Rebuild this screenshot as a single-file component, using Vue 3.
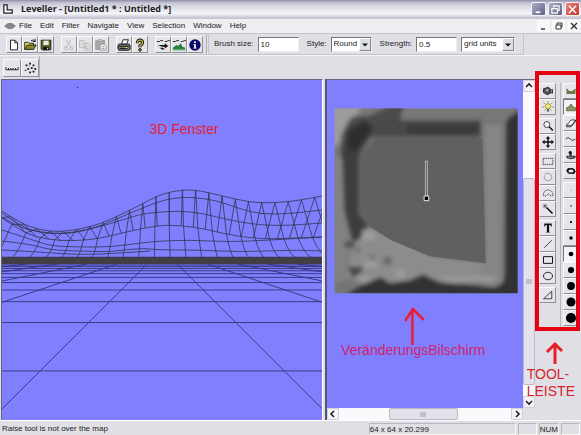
<script setup>
import { ref } from 'vue'

const menus = ['File', 'Edit', 'Filter', 'Navigate', 'View', 'Selection', 'Window', 'Help']
const brush = ref('10')
const strength = ref('0.5')
const style = ref('Round')
const unit = ref('grid units')

const G = '#b4b4b4'
const K = '#111'
const fileTools = [
  [
    { n: 'New', s: `<path d="M4 2.500h5l3 3v8h-8z" fill="#fff" stroke="${K}"/><path d="M9 2.500v3h3" fill="none" stroke="${K}"/>` },
    { n: 'Open', s: `<path d="M2 13V5h4l1 1h5v3" fill="#e6e65a" stroke="${K}"/><path d="M2 13l3-5h10l-3 5z" fill="#8c8c1c" stroke="${K}"/><path d="M9 3q3-2 5 1m0-3v3h-3" fill="none" stroke="${K}"/>` },
    { n: 'Save', s: `<path d="M2.500 2.500h11v11h-10l-1-1z" fill="#5d6a20" stroke="${K}"/><path d="M5 3h6v5H5z" fill="#e8e8e0"/><path d="M5 10h6v4H5z" fill="${K}"/><path d="M9 11h1v2H9z" fill="#fff"/>` }
  ],
  [
    { n: 'Cut', s: `<path d="M5 2l5 8M10 2l-5 8" stroke="${G}" fill="none"/><circle cx="4.500" cy="12" r="1.800" fill="none" stroke="${G}"/><circle cx="10.500" cy="12" r="1.800" fill="none" stroke="${G}"/>` },
    { n: 'Copy', s: `<path d="M2 3h5l2 2v6H2zM7 6h5l2 2v6H7z" fill="#e8e8ea" stroke="${G}"/><path d="M4 6h2M4 8h2M9 10h3M9 12h3" stroke="${G}"/>` },
    { n: 'Paste', s: `<path d="M2 3h10v10H2z" fill="#a8a8a8" stroke="#999"/><path d="M5 2h4v2H5z" fill="#ddd" stroke="#999"/><path d="M7 7h5l2 2v5H7z" fill="#eee" stroke="#999"/><path d="M9 10h3M9 12h3" stroke="#999"/>` }
  ],
  [
    { n: 'Print', s: `<path d="M5 7l2-5h6l-2 5z" fill="#fff" stroke="${K}"/><path d="M2 7h12l1 2v4l-2 1H2l-1-2V9z" fill="#777" stroke="${K}"/><path d="M2 9.500h12M3 12h9" stroke="${K}"/><path d="M9 11h3" stroke="#dd3"/>` },
    { n: 'Help', s: `<path d="M5 6q0-3.500 3-3.500t3 3q0 1.500-3 3.500v1.500" fill="none" stroke="${K}" stroke-width="3.600"/><path d="M5 6q0-3.500 3-3.500t3 3q0 1.500-3 3.500v1.500" fill="none" stroke="#b9b93a" stroke-width="1.500"/><circle cx="8" cy="13.500" r="1.500" fill="#88881c" stroke="${K}"/>` }
  ],
  [
    { n: 'Import', s: `<path d="M1 4h3l1-1h3M10 4h2l2-1h2" stroke="${K}" fill="none"/><path d="M2 8h8V6l4 3-4 3v-2H7z" fill="${K}"/><path d="M4 11h4l2 2H7z" fill="${K}"/>` },
    { n: 'Render', s: `<path d="M1 4h3l1-1h3M10 4h2l2-1h2" stroke="${K}" fill="none"/><path d="M1 14v-3l4-3 2 1 3-3 2 4 3 1v3z" fill="#27803b"/><path d="M1 13h14" stroke="#75b77c"/>` },
    { n: 'Info', s: `<circle cx="8" cy="8" r="6.500" fill="#080866"/><path d="M6 7h3v4h1v1H6v-1h1V8H6z" fill="#fff"/><circle cx="8" cy="4.800" r="1.200" fill="#fff"/>` }
  ]
]
const viewTools = [
  { n: 'Ruler', s: `<path d="M1 7v3h14V7M4 8v2M6.500 8v2M9 8v2M12 8v2" fill="none" stroke="${K}"/>` },
  { n: 'Points', s: `<path d="M3 4h2v2H3zM7 2h2v2H7zM11 4h2v2h-2zM5 8h2v2H5zM9 7h2v2H9zM13 8h2v2h-2zM2 10h2v1H2zM7 12h2v2H7zM11 11h2v2h-2zM7 5h1v1H7z" fill="${K}"/>` }
]
const drawTools = [
  [
    { n: 'Camera', s: `<path d="M2 5l6-2 3 2v6l-4 2-5-3z" fill="#555" stroke="${K}"/><circle cx="7" cy="7" r="1.500" fill="#ccc"/><path d="M11 7l3-1v5l-3-1z" fill="#999" stroke="${K}"/>` },
    { n: 'Light', s: `<circle cx="8" cy="7" r="3.500" fill="#f5ef72" stroke="#7c7a22"/><path d="M8 0v2M2 2l2 2M14 2l-2 2M0 8h3M13 8h3M3 13l2-2M13 13l-2-2" stroke="#8a861f"/><path d="M6.500 11h3v3h-3z" fill="#555"/>` }
  ],
  [
    { n: 'Zoom', s: `<circle cx="6.500" cy="6" r="4" fill="#f5f5f7" stroke="${K}"/><path d="M9.500 9l5 5" stroke="${K}" stroke-width="2.200"/>` },
    { n: 'Pan', s: `<path d="M8 0l3 3.500H9V7h3.500V5L16 8l-3.500 3V9H9v3.500h2L8 16l-3-3.500h2V9H3.500v2L0 8l3.500-3v2H7V3.500H5z" fill="${K}"/>` }
  ],
  [
    { n: 'Select rectangle', s: `<path d="M1.500 4.500h13v8h-13z" fill="none" stroke="${K}" stroke-dasharray="2 1"/>` },
    { n: 'Select ellipse', s: `<circle cx="8" cy="8" r="5" fill="none" stroke="#555" stroke-dasharray="2 1"/>` },
    { n: 'Lasso', s: `<path d="M2 11q0-7 6-7t7 7l-3 1-3-3-4 3z" fill="none" stroke="${K}" stroke-dasharray="2 1"/>` },
    { n: 'Wand', s: `<path d="M6 6l8 8" stroke="${K}" stroke-width="2.200"/><path d="M4 1v6M1 4h6M2 2l4 4M6 2L2 6" stroke="#555"/>` }
  ],
  [
    { n: 'Text', s: `<path d="M3 2h10v4h-1l-1-2H9.500v9l1.500 1H5l1.500-1V4H5L4 6H3z" fill="${K}"/>` },
    { n: 'Line', s: `<path d="M3 13L13 3" stroke="${K}"/>` },
    { n: 'Rectangle', s: `<path d="M2 3.500h12v9H2z" fill="none" stroke="${K}" stroke-width="1.300"/>` },
    { n: 'Ellipse', s: `<ellipse cx="8" cy="8" rx="6" ry="5" fill="none" stroke="${K}" stroke-width="1.200"/>` }
  ],
  [{ n: 'Slope', s: `<path d="M2 13L13 3v10z" fill="none" stroke="${K}"/>` }]
]
const shapeTools = [
  { n: 'Dig', s: `<path d="M2 5l4 4h4l4-4v7H2z" fill="#6b7c45"/><path d="M2 5l4 4h4l4-4" fill="none" stroke="#333"/>` },
  { n: 'Raise', on: true, s: `<path d="M2 13V9l3-1 3-4 3 4 3 1v4z" fill="#8c9663" stroke="#555b33"/>` },
  { n: 'Erase', s: `<path d="M2 11l6-7h6l-5 7z" fill="#fff" stroke="${K}"/><path d="M2 11v2h6l6-7V4" fill="none" stroke="${K}"/>` },
  { n: 'Smooth', s: `<path d="M1 8q3-4 6 0t7 0" fill="none" stroke="${K}"/>` },
  { n: 'Stamp', s: `<circle cx="7" cy="5" r="2.200" fill="${K}"/><path d="M6 6h3v3h5v3q-6 3-12 0V9h4z" fill="#333"/><path d="M4 11h7" stroke="#ccc"/>` },
  { n: 'Twist', s: `<ellipse cx="8" cy="8" rx="4.500" ry="3" fill="none" stroke="${K}" stroke-width="2"/><path d="M2 8l3-4M14 8l-3 4" stroke="${K}" stroke-width="1.500"/>` }
]
const brushes = [0.5, 1, 1.5, 2.3, 3.1, 4.1, 5.2, 6, 6.7]

// Ground grid, in perspective towards a vanishing point
const vx = 162
const vy = 249
const rows = Array.from({ length: 22 }, (_, n) => vy + 1 / (0.0082 + 0.0054 * n))
const rays = []
for (let k = 1; k <= 19; k += 2) {
  rays.push(`M${vx - 15 * k} ${vy + 15}L${vx - 320} ${vy + 320 / k}`)
  rays.push(`M${vx + 15 * k} ${vy + 15}L${vx + 320} ${vy + 320 / k}`)
}

// Hill contours, from the ridge down to the ground
const contours = [
  [[2, 211], [20, 223], [40, 230], [60, 232], [80, 229], [100, 224], [120, 215], [140, 205], [157, 196], [170, 192], [182, 190], [195, 190], [210, 193], [230, 198], [250, 202], [265, 203], [285, 202], [300, 200], [322, 196]],
  [[2, 213], [20, 226], [40, 233], [60, 234], [80, 232], [100, 226], [130, 213], [160, 201], [175, 198], [190, 197], [215, 200], [240, 209], [260, 214], [285, 214], [322, 210]],
  [[2, 217], [20, 228], [40, 232], [62, 234], [85, 230], [110, 224], [140, 214], [160, 212], [180, 211], [200, 213], [225, 219], [250, 224], [280, 226], [322, 223]],
  [[2, 218], [20, 230], [35, 237], [60, 241], [90, 240], [110, 236], [130, 231], [150, 227], [165, 225], [185, 226], [205, 229], [225, 234], [250, 238], [270, 239], [322, 237]],
  [[2, 230], [30, 239], [50, 246], [80, 247], [110, 247], [140, 243], [160, 241], [190, 240], [230, 242], [270, 240], [322, 237]],
  [[2, 241], [30, 244], [50, 250], [80, 251], [110, 252], [140, 248], [160, 250], [200, 250], [240, 252], [290, 250], [322, 251]],
  [[2, 250], [40, 252], [80, 255], [120, 253], [150, 251]]
]
const smooth = pts => {
  let d = `M${pts[0]}`
  for (let i = 1; i < pts.length - 1; i++) {
    const [x, y] = pts[i]
    const [nx, ny] = pts[i + 1]
    d += `Q${x} ${y} ${(x + nx) / 2} ${(y + ny) / 2}`
  }
  return d + `L${pts[pts.length - 1]}`
}
const hill = contours.map(smooth)
const at = (pts, x) => {
  if (x <= pts[0][0]) return pts[0][1]
  for (let i = 1; i < pts.length; i++) {
    if (x <= pts[i][0]) {
      const [a, b] = pts[i - 1]
      const [c, d] = pts[i]
      return b + ((d - b) * (x - a)) / (c - a)
    }
  }
  return pts[pts.length - 1][1]
}
const ribs = []
for (let i = -14; i <= 14; i++) {
  const top = 169 + i * 13.2
  const bottom = 170 + i * 15.8
  const mid = top + i * 1.1
  const ty = at(contours[0], top)
  const my = at(contours[3], mid)
  ribs.push(`M${top} ${ty}L${mid} ${my}Q${(mid + bottom) / 2} ${my + 18} ${bottom} 258`)
  const back = top - i * 1.2
  if (top > 2) ribs.push(`M${top} ${ty}L${back} ${at(contours[3], back)}`)
}
</script>

<template>
  <div class="app">
    <header class="title">
      <svg class="logo" viewBox="0 0 12 12"><path d="M1 1h4v6h6v4H1z" fill="#fff" stroke="#222" stroke-width="1.500" /></svg>
      <h1>Leveller - [Untitled1 * : Untitled *]</h1>
      <button class="win" aria-label="Minimize"><svg viewBox="0 0 12 12"><path d="M3 9h5" stroke="#fff" stroke-width="2" /></svg></button>
      <button class="win" aria-label="Restore"><svg viewBox="0 0 12 12"><path d="M4 4V2h6v5H8M2 5h6v5H2z" fill="none" stroke="#fff" stroke-width="1.200" /></svg></button>
      <button class="win close" aria-label="Close"><svg viewBox="0 0 12 12"><path d="M2 2l8 8M10 2l-8 8" stroke="#fff" stroke-width="1.600" /></svg></button>
    </header>

    <nav class="menu">
      <svg class="doc" viewBox="0 0 12 12"><path d="M0 6l4-3h4l4 3-4 3H4z" fill="#888" /></svg>
      <button v-for="m in menus" :key="m" class="item">{{ m }}</button>
      <span class="spring"></span>
      <button class="mdi" aria-label="Minimize document"><svg viewBox="0 0 10 10"><path d="M2 8h4" stroke="#333" stroke-width="1.400" /></svg></button>
      <button class="mdi" aria-label="Restore document"><svg viewBox="0 0 10 10"><path d="M3 4V2h5v4H7M2 4h5v4H2z" fill="none" stroke="#333" /></svg></button>
      <button class="mdi" aria-label="Close document"><svg viewBox="0 0 10 10"><path d="M2 2l6 6M8 2L2 8" stroke="#333" stroke-width="1.400" /></svg></button>
    </nav>

    <div class="bar">
      <div class="groups">
        <div v-for="(g, i) in fileTools" :key="i" class="group">
          <button v-for="t in g" :key="t.n" class="tool" :aria-label="t.n"><svg viewBox="0 0 16 16" v-html="t.s"></svg></button>
        </div>
      </div>
      <form class="options" @submit.prevent>
        <label for="size">Brush size:</label>
        <input id="size" v-model="brush" class="field" />
        <label class="next" for="style">Style:</label>
        <span class="combo round">
          <select id="style" v-model="style"><option>Round</option><option>Square</option></select>
          <svg viewBox="0 0 10 10"><path d="M2 4h6L5 7z" fill="#111" /></svg>
        </span>
        <label class="next" for="strength">Strength:</label>
        <input id="strength" v-model="strength" class="field" />
        <span class="combo units">
          <select v-model="unit" aria-label="Strength unit"><option>grid units</option><option>percent</option></select>
          <svg viewBox="0 0 10 10"><path d="M2 4h6L5 7z" fill="#111" /></svg>
        </span>
      </form>
    </div>

    <div class="bar second">
      <div class="groups">
        <button v-for="t in viewTools" :key="t.n" class="tool" :aria-label="t.n"><svg viewBox="0 0 16 16" v-html="t.s"></svg></button>
      </div>
    </div>

    <main class="work">
      <section class="scene">
        <svg class="fill" viewBox="2 80 320 340" preserveAspectRatio="none">
          <g fill="none" stroke="#333350" stroke-width="0.800">
            <path v-for="(d, i) in hill" :key="'h' + i" :d="d" />
            <path v-for="(d, i) in ribs" :key="'r' + i" :d="d" />
          </g>
          <g fill="none" stroke="#33337a" stroke-width="0.900">
            <path v-for="(y, i) in rows" :key="'y' + i" :d="`M0 ${y}H324`" />
            <path v-for="(d, i) in rays" :key="'v' + i" :d="d" />
          </g>
          <rect x="0" y="257" width="324" height="7" fill="#404044" />
          <circle cx="77.500" cy="87.500" r="0.700" fill="#333380" />
        </svg>
        <p class="note scene-note">3D Fenster</p>
      </section>

      <section class="map">
        <div class="canvas">
          <svg class="fill" viewBox="326 80 198 328" preserveAspectRatio="none">
            <defs>
              <filter id="soft" x="-10%" y="-10%" width="120%" height="120%"><feGaussianBlur stdDeviation="6" /></filter>
              <filter id="edge"><feGaussianBlur stdDeviation="1.500" /></filter>
              <clipPath id="tile"><rect x="41" y="40" width="556" height="555" /></clipPath>
            </defs>
            <g transform="translate(320 95) scale(0.3333)">
              <g clip-path="url(#tile)">
                <rect x="41" y="40" width="556" height="555" fill="#777" />
                <g filter="url(#soft)">
                  <path d="M30 30h100L95 75 70 120 50 150 30 160z" fill="#9c9c9c" />
                  <path d="M90 66l60-4 60-30h40l-10 40-20 30H90z" fill="#4c4c4c" />
                  <path d="M250 55H560V76H250z" fill="#777" />
                  <path d="M85 75H485V126H150L110 190 60 190 62 120z" fill="#484848" />
                  <path d="M260 86H480V116H260z" fill="#3a3a3a" />
                  <path d="M80 110l50-35 30 25-55 75-30 5z" fill="#2e2e2e" />
                  <path d="M64 165h50v190l30 40-15 40H95L70 345z" fill="#3d3d3d" />
                  <path d="M30 185h32l8 180 14 75-20 160H30z" fill="#828282" />
                  <path d="M90 470l50-72 70 22 130 65 165 20 40-10-10 60-130 10-90-20-80 20-80 10-80-30z" fill="#8c8c8c" />
                  <path d="M497 90h50V570h-60v-60h15z" fill="#868686" />
                  <path d="M563 75l50-35V610H555l4-90z" fill="#333" />
                  <path d="M70 600l60-32 50-22 30 18 60-8 40-18 50 26 80 6 90 8 30-22 40-10v60z" fill="#333" />
                  <path d="M80 515h50l-10 20-25 14zM70 440h32v16H70z" fill="#484848" />
                  <path d="M190 485h25v25h-25zM150 480h14v12h-14zM100 460h20v12h-20z" fill="#6a6a6a" />
                  <path d="M125 405h40v30h-40zM130 500h40v20h-40zM225 525h30v25h-30zM110 545h40v15h-40zM355 545h170v14H380z" fill="#9c9c9c" />
                  <path d="M42 560h60l-20 35H42z" fill="#747474" />
                  <path d="M160 130H480L490 490 340 480 140 388 116 350V185z" fill="#606060" />
                </g>
                <path d="M180 130H490L500 505 330 484 210 434 150 396 124 350V190z" fill="#606060" filter="url(#edge)" />
                <path d="M545 100V530" stroke="#a0a0a0" stroke-width="3" filter="url(#edge)" />
              </g>
              <path d="M317 198h6V304h-6z" fill="#606060" stroke="#ddd" stroke-width="2" />
              <path d="M313 303h14v14h-14z" fill="#000" stroke="#eee" stroke-width="3" />
            </g>
            <path d="M412.500 345V310M405 321l8-12 11 11" fill="none" stroke="#ed1c2e" stroke-width="2.500" />
          </svg>
          <p class="note map-note">VeränderungsBilschirm</p>
        </div>
        <div class="hscroll">
          <button class="arrow" aria-label="Scroll left"><svg viewBox="0 0 10 10"><path d="M6 2L3 5l3 3" /></svg></button>
          <span class="track h"><span class="thumb wide"></span></span>
          <button class="arrow" aria-label="Scroll right"><svg viewBox="0 0 10 10"><path d="M4 2l3 3-3 3" /></svg></button>
        </div>
        <div class="vscroll">
          <button class="arrow" aria-label="Scroll up"><svg viewBox="0 0 10 10"><path d="M2 6l3-3 3 3" /></svg></button>
          <span class="track v"><span class="thumb tall"></span></span>
          <button class="arrow" aria-label="Scroll down"><svg viewBox="0 0 10 10"><path d="M2 4l3 3 3-3" /></svg></button>
        </div>
      </section>

      <aside class="dock">
        <div class="column">
          <div v-for="(g, i) in drawTools" :key="i" class="stack">
            <button v-for="t in g" :key="t.n" class="tool small" :aria-label="t.n"><svg viewBox="0 0 16 16" v-html="t.s"></svg></button>
          </div>
        </div>
        <div class="column edge">
          <div class="stack">
            <button v-for="t in shapeTools" :key="t.n" class="tool small" :class="{ on: t.on }" :aria-label="t.n"><svg viewBox="0 0 16 16" v-html="t.s"></svg></button>
          </div>
          <div class="stack">
            <button v-for="(r, i) in brushes" :key="r" class="tool small" :class="{ on: i === 4 }" :aria-label="`Brush ${i + 1}`"><svg viewBox="0 0 16 16"><circle cx="8" cy="8" :r="r" fill="#000" /></svg></button>
          </div>
        </div>
        <div class="frame"></div>
        <div class="callout">
          <svg viewBox="0 0 20 26"><path d="M11 24V5M3 12l8-8 7 7" fill="none" stroke="#e8202a" stroke-width="3" /></svg>
          <p class="note">TOOL-<br />LEISTE</p>
        </div>
      </aside>
    </main>

    <footer class="status">
      <span class="message">Raise tool is not over the map</span>
      <span class="cell">64 x 64 x 20.299</span>
      <span class="cell gap"></span>
      <span class="cell num">NUM</span>
      <span class="cell gap"></span>
    </footer>
  </div>
</template>

<style>
body {
  margin: 0;
}
</style>

<style scoped>
* {
  box-sizing: border-box;
}
.app {
  display: flex;
  flex-direction: column;
  height: 100vh;
  background: #e0dfe5;
  color: #222;
  font: 8px/12px "Liberation Sans", Arial, sans-serif;
}
button,
input,
select {
  margin: 0;
  padding: 0;
  border: 0;
  border-radius: 0;
  background: none;
  color: inherit;
  font: inherit;
}
svg {
  display: block;
}
.title {
  display: flex;
  align-items: center;
  gap: 2px;
  height: 18px;
  padding: 0 1px 0 3px;
  background: linear-gradient(#8e8da8, #c3c2d2 15%, #dddde6 40%, #f4f4f8 75%, #c5c5d2);
}
.title h1 {
  flex: 1;
  margin: 0 0 0 6px;
  font: 700 9px/12px "Open Sans", "Noto Sans", sans-serif;
  white-space: nowrap;
}
.logo {
  width: 10px;
  height: 12px;
}
.win {
  width: 15px;
  height: 14px;
  border: 1px solid #f4f4f8;
  border-radius: 2px;
  background: linear-gradient(135deg, #aeb0c8, #5d6084);
}
.win svg {
  width: 11px;
  height: 11px;
  margin: auto;
}
.close {
  background: linear-gradient(135deg, #e4877e, #c4322c);
}
.menu {
  display: flex;
  align-items: center;
  gap: 8px;
  height: 15px;
  padding: 0 1px 0 4px;
  border-top: 1px solid #c6c6d0;
  background: #eeeef3;
}
.doc {
  width: 12px;
  height: 12px;
  margin-right: -5px;
}
.spring {
  flex: 1;
}
.mdi {
  width: 13px;
  height: 12px;
  margin-left: -6px;
  background: #f8f8fa;
}
.mdi svg {
  width: 10px;
  height: 10px;
  margin: auto;
}
.bar {
  display: flex;
  gap: 1px;
  height: 22px;
  border-top: 1px solid #c4c3ca;
}
.groups {
  display: flex;
  gap: 7px;
  padding: 2px 3px 1px 6px;
  border-right: 1px solid #b0b0b6;
  border-bottom: 1px solid #c4c3ca;
}
.group {
  display: flex;
}
.second {
  height: 24px;
  border-top-color: #f4f4f6;
}
.second .groups {
  gap: 0;
  align-items: center;
  padding: 0 0 0 3px;
  border-bottom: 0;
}
.tool {
  display: flex;
  align-items: center;
  justify-content: center;
  width: 16px;
  height: 17px;
  border: 1px solid;
  border-color: #fafafa #8f8f96 #8f8f96 #fafafa;
  background: #e6e5ea;
}
.tool svg {
  flex: none;
  width: 14px;
  height: 14px;
}
.second .tool {
  width: 18px;
  height: 18px;
}
.options {
  display: flex;
  align-items: center;
  gap: 4px;
  padding: 0 8px 0 5px;
  border: 1px solid #c4c3ca;
  border-top: 0;
}
.next {
  margin-left: 4px;
}
.field,
.combo {
  width: 41px;
  height: 15px;
  border: 1px solid;
  border-color: #777 #eee #eee #777;
  background: #fff;
}
.field {
  padding: 0 2px;
}
.combo {
  display: flex;
  position: relative;
}
.combo select {
  width: 100%;
  padding: 0 2px;
  appearance: none;
}
.combo svg {
  position: absolute;
  top: 0;
  right: 0;
  width: 12px;
  height: 13px;
  border: 1px solid;
  border-color: #fff #888 #888 #fff;
  background: #e0dfe5;
  pointer-events: none;
}
.units {
  width: 54px;
}
.work {
  display: grid;
  grid-template-columns: 320fr 210fr 46px;
  flex: 1;
  min-height: 0;
  padding-left: 1px;
}
.scene,
.canvas {
  position: relative;
  min-width: 0;
  min-height: 0;
  background: #8080ff;
}
.scene {
  border: 1px solid #66667c;
  border-right: 1px solid #fff;
  border-bottom: 0;
}
.fill {
  position: absolute;
  width: 100%;
  height: 100%;
}
.map {
  display: grid;
  grid-template: 1fr 12px / 1fr 12px;
  min-width: 0;
  margin-left: 2px;
  border-top: 1px solid #66667c;
  border-left: 2px solid #555570;
}
.note {
  margin: 0;
  color: #e51c30;
  font: 14px/17px "Liberation Sans", Arial, sans-serif;
}
.scene-note,
.map-note {
  position: absolute;
}
.scene-note {
  top: 12%;
  left: 46%;
}
.map-note {
  top: 80%;
  left: 7%;
  color: #d0206c;
}
.hscroll {
  grid-area: 2 / 1;
  display: flex;
}
.vscroll {
  grid-area: 1 / 2;
  display: flex;
  flex-direction: column;
}
.arrow {
  width: 12px;
  height: 12px;
  border: 1px solid #d0d0d8;
  border-radius: 2px;
  background: #f4f4f8;
}
.arrow svg {
  width: 10px;
  height: 10px;
  fill: none;
  stroke: #222;
  stroke-width: 1.6;
}
.track {
  display: flex;
  flex: 1;
  background: #fafafc;
}
.track.v {
  flex-direction: column;
}
.thumb {
  display: flex;
  align-items: center;
  justify-content: center;
  border: 1px solid #b8b8c4;
  border-radius: 2px;
  background: #e2e2ea;
}
.thumb::after {
  width: 6px;
  height: 5px;
  background: #c0c0cc;
  content: "";
}
.wide {
  width: 40%;
  margin-left: 29%;
}
.tall {
  height: 68%;
  margin-top: 86px;
}
.dock {
  position: relative;
  display: flex;
  gap: 4px;
  padding: 4px 3px 0 4px;
}
.column {
  display: flex;
  flex-direction: column;
  gap: 3px;
}
.edge {
  padding-left: 2px;
  border-left: 1px solid #b8b8be;
  height: 246px;
}
.small {
  width: 17px;
  height: 16px;
}
.small svg {
  width: 12px;
  height: 12px;
}
.edge .small {
  width: 15px;
}
.on {
  border-color: #777 #fafafa #fafafa #777;
  background: #f4f4f6;
}
.frame {
  position: absolute;
  top: -8px;
  right: 1px;
  left: 0;
  height: 260px;
  border: 4px solid #e60012;
}
.callout {
  position: absolute;
  top: 261px;
  right: 6px;
}
.callout svg {
  width: 20px;
  height: 26px;
  margin-left: 17px;
}
.callout .note {
  color: #d8242a;
}
.status {
  display: flex;
  align-items: center;
  gap: 2px;
  height: 15px;
  padding: 1px 1px 0 2px;
  border-top: 1px solid #fff;
}
.message {
  flex: 367;
}
.cell {
  flex: 146;
  height: 12px;
  border: 1px solid;
  border-color: #b8b8be #f8f8f8 #f8f8f8 #b8b8be;
  line-height: 11px;
}
.gap {
  flex: 0 0 19px;
}
.num {
  flex: 0 0 20px;
}
</style>
